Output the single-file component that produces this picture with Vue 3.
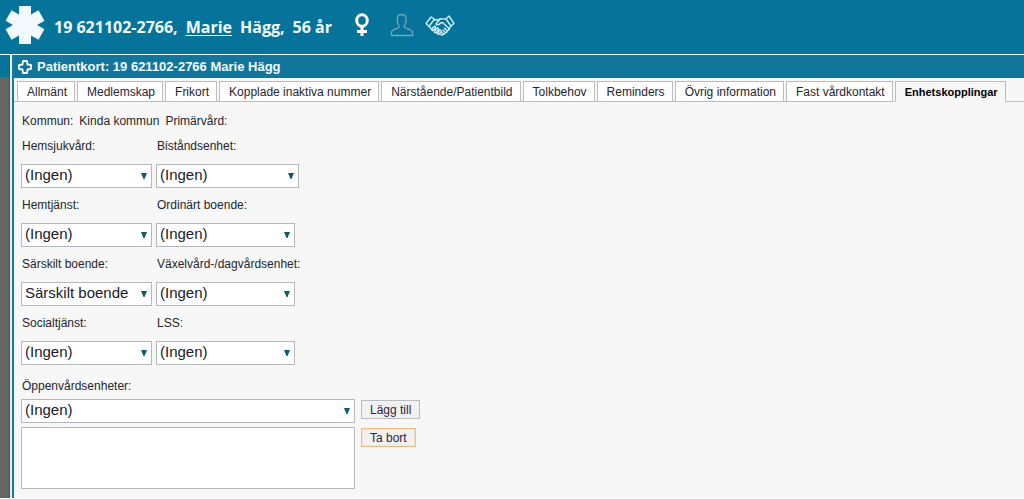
<script setup>
import { ref } from 'vue'

const tabs = [
  'Allmänt',
  'Medlemskap',
  'Frikort',
  'Kopplade inaktiva nummer',
  'Närstående/Patientbild',
  'Tolkbehov',
  'Reminders',
  'Övrig information',
  'Fast vårdkontakt',
  'Enhetskopplingar'
]
const active = ref('Enhetskopplingar')

const fields = [
  { id: 'hemsjukvard', label: 'Hemsjukvård:', value: '(Ingen)' },
  { id: 'bistand', label: 'Biståndsenhet:', value: '(Ingen)', wide: true },
  { id: 'hemtjanst', label: 'Hemtjänst:', value: '(Ingen)' },
  { id: 'ordinart', label: 'Ordinärt boende:', value: '(Ingen)' },
  { id: 'sarskilt', label: 'Särskilt boende:', value: 'Särskilt boende' },
  { id: 'vaxelvard', label: 'Växelvård-/dagvårdsenhet:', value: '(Ingen)' },
  { id: 'social', label: 'Socialtjänst:', value: '(Ingen)' },
  { id: 'lss', label: 'LSS:', value: '(Ingen)' }
]
</script>

<template>
  <div class="app">
    <header class="banner">
      <svg class="star" viewBox="0 0 40 40" aria-hidden="true">
        <g fill="#f0faff">
          <rect x="14" y="1" width="12" height="38" />
          <rect x="14" y="1" width="12" height="38" transform="rotate(60 20 20)" />
          <rect x="14" y="1" width="12" height="38" transform="rotate(120 20 20)" />
        </g>
      </svg>
      <h1 class="patient">
        <span>19 621102-2766,</span>
        <a href="#">Marie</a>
        <span>Hägg,</span>
        <span>56 år</span>
      </h1>
      <svg class="female" viewBox="0 0 16 24" aria-hidden="true">
        <ellipse cx="8" cy="7.500" rx="5.300" ry="5.800" fill="none" stroke="#fff" stroke-width="3" />
        <path d="M8 13v10M3 18.500h10" fill="none" stroke="#fff" stroke-width="3" />
      </svg>
      <svg class="person" viewBox="0 0 24 24" aria-hidden="true">
        <path d="M1.500 22.500v-4c1-2 6-3 7.500-4v-2C7 10 7 7 7.500 4.500 8 2 10 1.500 11.500 1.500S15.500 2 16 4.500c.5 2.500 0 5.500-1.500 8v2c1.500 1 7 2 8 4v4z" fill="none" stroke="#72a6b8" stroke-width="1.300" />
      </svg>
      <svg class="shake" viewBox="0 0 30 24" aria-hidden="true">
        <g fill="none" stroke="#c9f0fb" stroke-width="1.400" stroke-linejoin="round" stroke-linecap="round">
          <path d="M6 3 1 9.500l3 3L9.500 5zM24 2l5 7.500-3 2.500-5-7z" />
          <path d="M9 5.500c2 .8 4 .5 6-.5 2-.8 4 .5 6 0M15 5l-4 5c1 1.500 3 1 4.500-1l2-.5 6.500 6" />
          <path d="m4.500 12.500 3 4M25.500 12.500l-1.500 3" />
          <path d="m9 12.500-2 2.500c-.5 1 .8 2 1.600 1.300l2-2.500c.5-1-.8-2-1.600-1.300zm3 1.800-2.500 3c-.5 1 .8 2 1.700 1.200l2.400-3c.4-1-.8-2-1.600-1.200zm2.600 2L12.500 19c-.4 1 .8 1.800 1.600 1l2-2.400c.4-1-.8-2-1.500-1.300z" />
          <path d="m15 20 1.500 1c1 .4 2-.6 1.500-1.500 1.300 1 2.700 0 2.200-1.200 1.500.5 2.500-.7 2-1.800 1.500 0 2.300-1.200 1.500-2.200M18 19.500 16.500 18M20 18l-2-2M22 16.500l-2.500-2.500" />
        </g>
      </svg>
    </header>

    <div class="workspace">
      <aside class="backdrop"></aside>
      <section class="card">
        <h2 class="title">
          <svg viewBox="0 0 14 14" aria-hidden="true">
            <path d="M5 1h4l.5 3.500L13 5v4l-3.500.5L9 13H5l-.5-3.500L1 9V5l3.500-.5z" fill="none" stroke="#fff" stroke-width="1.800" stroke-linejoin="round" />
          </svg>
          Patientkort: 19 621102-2766 Marie Hägg
        </h2>
        <nav class="tabs" role="tablist">
          <button
            v-for="t in tabs"
            :key="t"
            type="button"
            role="tab"
            :aria-selected="t === active"
            :class="['tab', { current: t === active }]"
            @click="active = t"
          >{{ t }}</button>
        </nav>

        <form class="content" @submit.prevent>
          <p class="facts"><span>Kommun:</span><span>Kinda kommun</span><span>Primärvård:</span></p>
          <div class="fields">
            <div v-for="f in fields" :key="f.id" class="field">
              <label :for="f.id">{{ f.label }}</label>
              <div :class="['drop', { wide: f.wide }]">
                <select :id="f.id"><option>{{ f.value }}</option></select>
                <svg viewBox="0 0 6 6" aria-hidden="true"><path d="M0 0h6L3.500 6h-1z" /></svg>
              </div>
            </div>
          </div>
          <label class="units-label" for="units">Öppenvårdsenheter:</label>
          <div class="units">
            <div class="lists">
              <div class="drop">
                <select id="units"><option>(Ingen)</option></select>
                <svg viewBox="0 0 6 6" aria-hidden="true"><path d="M0 0h6L3.500 6h-1z" /></svg>
              </div>
              <select class="chosen" size="4" aria-label="Valda öppenvårdsenheter"></select>
            </div>
            <div class="actions">
              <button type="button">Lägg till</button>
              <button type="button" class="focused">Ta bort</button>
            </div>
          </div>
        </form>
      </section>
    </div>
  </div>
</template>

<style>
body { margin: 0; }
</style>

<style scoped>
* { box-sizing: border-box; }
.app {
  min-height: 100vh;
  display: flex;
  flex-direction: column;
  border-bottom: 1px solid #fff;
  font-family: "Liberation Sans", Arial, sans-serif;
  font-size: 12px;
  color: #25252f;
  background: #f7f7f7;
}
.banner {
  display: flex;
  align-items: flex-start;
  height: 55px;
  padding: 5px 5px 0;
  background: #05739a;
  border-bottom: 1px solid #fff;
}
.star { width: 40px; height: 40px; }
.patient {
  display: flex;
  gap: 8px;
  margin: 10px 0 0 9px;
  font: bold 16px/24px "Open Sans", Calibri, sans-serif;
  color: #f2fbff;
  white-space: nowrap;
}
.patient a { color: inherit; text-underline-offset: 2px; }
.female { width: 16px; height: 24px; margin: 8px 0 0 22px; }
.person { width: 24px; height: 24px; margin: 8px 0 0 20px; }
.shake { width: 30px; height: 24px; margin: 9px 0 0 11px; }

.workspace { flex: 1; display: flex; }
.backdrop {
  width: 10px;
  background: linear-gradient(#05739a 22px, #646661 22px);
  border-right: 1px solid #2f5b60;
}
.card {
  flex: 1;
  min-width: 0;
  display: flex;
  flex-direction: column;
  border-left: 2px solid #e4f5fc;
}
.card > * { border-left: 2px solid #1479a6; }
.title {
  display: flex;
  align-items: center;
  gap: 5px;
  height: 23px;
  margin: 0;
  padding-left: 4px;
  background: #12759c;
  color: #f2fbff;
  font: bold 13px/22px "Liberation Sans", Arial, sans-serif;
}
.title svg { width: 14px; height: 14px; }
.tabs {
  display: flex;
  gap: 2px;
  height: 24px;
  padding: 3px 0 0 3px;
  box-shadow: inset 0 -1px #bfbfbf;
}
.tab {
  height: 21px;
  padding: 0 7px 0 9px;
  border: 1px solid #b9bcc0;
  background: #fff;
  color: #25252f;
  font: 12px/20px "Liberation Sans", Arial, sans-serif;
  white-space: nowrap;
}
.tab.current {
  border-bottom-color: #f7f7f7;
  background: #f7f7f7;
  font-weight: bold;
  font-size: 11px;
  color: #000;
}
.content { flex: 1; padding: 10px 0 9px 7px; }
.facts { display: flex; gap: 6px; margin: 0; padding-left: 1px; line-height: 18px; }
.fields {
  display: grid;
  grid-template-columns: 131px 143px;
  gap: 8px 4px;
  padding-top: 7px;
}
.field label, .units-label { display: block; padding-left: 1px; line-height: 18px; white-space: nowrap; }
.field .drop { margin-top: 9px; }
.field:nth-child(even) .drop { width: 139px; }
.field:nth-child(even) .drop.wide { width: 143px; }
.drop { position: relative; height: 24px; }
.drop select {
  width: 100%;
  height: 100%;
  padding: 0 16px 2px 3px;
  appearance: none;
  border: 1px solid #b4b8bb;
  border-radius: 0;
  background: #fff;
  color: #20202a;
  font: 15px/20px "Liberation Sans", Arial, sans-serif;
}
.drop svg { position: absolute; right: 5px; top: 9px; width: 6px; height: 6px; fill: #0b5a70; pointer-events: none; }
.units-label { margin-top: 12px; }
.units { display: flex; gap: 6px; margin-top: 4px; }
.lists { width: 334px; display: grid; gap: 4px; }
.chosen { display: block; width: 100%; height: 62px; border: 1px solid #b4b8bb; border-radius: 0; background: #fff; }
.actions { display: flex; flex-direction: column; align-items: flex-start; gap: 9px; padding-top: 1px; }
.actions button {
  height: 19px;
  padding: 0 8px;
  border: 1px solid #b9bdc1;
  background: #f1f1f2;
  color: #30243a;
  font: 12px/16px "Liberation Sans", Arial, sans-serif;
}
.actions .focused { border: 1px solid #efbd7c; box-shadow: inset 0 0 0 1px #fae3c4; }
</style>
